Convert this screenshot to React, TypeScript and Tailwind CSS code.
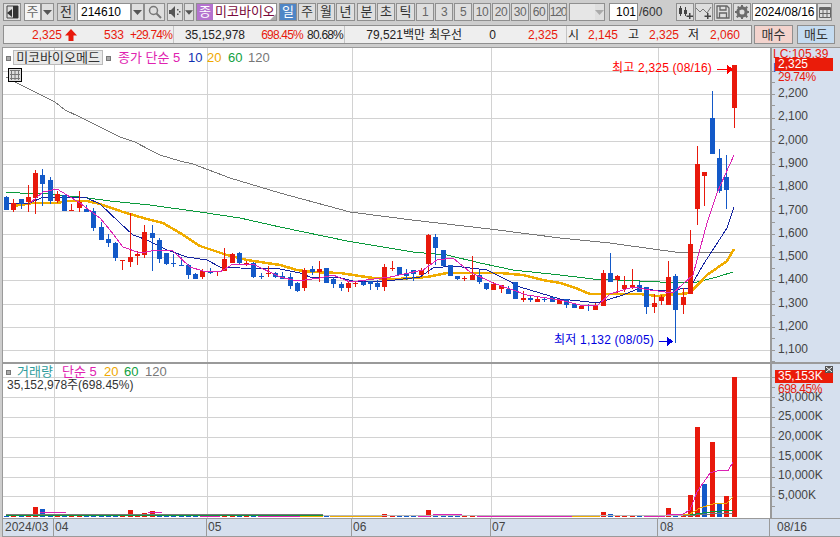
import type { ReactNode } from "react";

type Candle = [number, number, number, number, "r" | "b"];

// 일봉: 몸통 위, 몸통 아래, 꼬리 위, 꼬리 아래 (화면 y좌표)
const candles: Candle[] = [
  [197, 210, 196, 210, "b"], [203, 210, 199, 212, "r"], [199, 204, 199, 209, "b"], [197, 202, 185, 212, "r"],
  [173, 198, 170, 214, "r"], [175, 184, 169, 206, "b"], [180, 201, 177, 204, "b"], [194, 201, 191, 203, "r"],
  [195, 211, 195, 211, "b"], [210, 211, 204, 211, "r"], [202, 208, 191, 212, "r"], [209, 212, 205, 212, "b"],
  [211, 228, 208, 231, "b"], [227, 240, 222, 240, "b"], [239, 243, 234, 247, "b"], [243, 258, 242, 261, "b"],
  [260, 261, 260, 270, "r"], [257, 262, 213, 267, "r"], [254, 256, 251, 265, "r"], [232, 255, 225, 258, "r"],
  [233, 238, 225, 271, "b"], [240, 259, 238, 263, "b"], [253, 264, 253, 265, "b"], [263, 264, 254, 267, "b"],
  [265, 266, 257, 266, "b"], [265, 275, 264, 279, "b"], [274, 279, 273, 279, "b"], [271, 277, 269, 279, "r"],
  [272, 273, 268, 274, "b"], [271, 272, 271, 276, "r"], [259, 271, 248, 271, "r"], [254, 263, 253, 263, "r"],
  [253, 263, 252, 264, "b"], [263, 265, 261, 266, "r"], [263, 277, 262, 278, "b"], [276, 277, 273, 279, "b"],
  [273, 274, 266, 277, "r"], [273, 277, 272, 278, "b"], [276, 279, 272, 279, "b"], [277, 286, 273, 289, "b"],
  [283, 291, 282, 292, "b"], [270, 288, 268, 291, "r"], [269, 272, 266, 275, "b"], [269, 272, 261, 282, "r"],
  [268, 283, 268, 283, "b"], [279, 284, 277, 288, "b"], [284, 288, 282, 291, "b"], [283, 288, 281, 292, "r"],
  [283, 284, 282, 287, "r"], [282, 285, 280, 286, "b"], [281, 284, 281, 290, "b"], [283, 287, 280, 290, "b"],
  [267, 287, 264, 291, "r"], [268, 269, 261, 271, "r"], [267, 275, 267, 275, "b"], [274, 276, 269, 280, "b"],
  [270, 274, 270, 281, "b"], [270, 275, 268, 275, "r"], [235, 264, 234, 274, "r"], [237, 248, 234, 265, "b"],
  [250, 266, 250, 267, "b"], [265, 276, 265, 276, "b"], [276, 279, 276, 280, "b"], [278, 279, 276, 281, "r"],
  [275, 280, 256, 280, "r"], [275, 282, 270, 284, "b"], [283, 289, 283, 290, "b"], [284, 290, 282, 290, "r"],
  [285, 289, 285, 293, "r"], [289, 294, 286, 294, "b"], [282, 299, 282, 299, "b"], [298, 300, 291, 302, "r"],
  [298, 300, 296, 302, "b"], [299, 302, 297, 302, "r"], [299, 300, 297, 302, "b"], [297, 302, 297, 302, "b"],
  [300, 304, 299, 304, "r"], [299, 305, 299, 308, "b"], [304, 308, 304, 308, "b"], [306, 309, 306, 309, "r"],
  [305, 306, 304, 311, "b"], [305, 310, 303, 310, "r"], [273, 306, 270, 306, "r"], [273, 282, 253, 282, "b"],
  [276, 280, 275, 293, "r"], [285, 289, 276, 292, "r"], [285, 288, 269, 289, "r"], [285, 292, 281, 292, "b"],
  [287, 307, 287, 314, "b"], [303, 307, 294, 313, "r"], [297, 301, 295, 305, "r"], [277, 305, 261, 305, "r"],
  [276, 310, 274, 343, "b"], [297, 305, 288, 314, "r"], [244, 294, 230, 294, "r"], [164, 209, 146, 225, "r"],
  [172, 176, 172, 206, "r"], [118, 154, 91, 154, "b"], [158, 191, 149, 193, "b"], [177, 190, 155, 209, "b"],
  [65, 108, 65, 128, "r"],
];

const candleX = (i: number) => Math.floor(6.5 + 7.276 * i);

const ma120 = "6,77 15,82 33,91 55,102 65,110 80,117 100,127 120,137 135,142 150,150 160,155 180,161 193,164 230,178 280,193 350,212 412,220 490,229 560,238 610,243 660,250 683,253 733,252";
const ma60 = "6,192 20,193 50,194 88,198 110,201 150,205 200,212 240,218 280,227 347,241 413,252 447,255 480,263 513,270 560,275 593,279 640,281 660,282 693,283 717,277 733,272";
const ma20 = "13,206 33,203 57,203 67,201 87,201 100,204 123,212 147,219 163,223 180,233 200,246 227,255 247,260 280,265 297,270 313,272 340,273 373,278 397,279 427,277 447,273 500,273 523,275 543,280 560,283 573,287 590,294 640,294 657,296 690,293 707,275 727,261 734,249";
const ma10 = "7,203 30,203 43,197 57,197 87,198 100,204 120,223 133,235 147,240 167,250 187,257 207,260 220,267 240,268 280,269 300,273 310,277 337,277 353,281 387,281 420,277 433,268 453,266 487,270 507,280 520,287 560,299 580,301 597,303 623,295 640,288 660,291 690,288 703,265 727,228 734,207";
const ma5 = "30,203 43,192 57,189 67,195 80,203 100,218 110,230 123,247 140,253 157,250 173,251 190,267 203,271 220,272 233,264 253,264 280,277 297,281 320,278 333,275 350,282 390,277 423,270 437,260 453,258 470,272 493,283 527,295 560,300 580,305 598,305 610,294 633,287 650,290 673,293 693,275 707,223 717,193 734,155";

// 거래량 막대 (바닥에 붙은 것 외)
const volTop: Record<number, [number, "r" | "b"]> = {
  4: [507, "r"], 5: [509, "b"], 17: [510, "r"], 19: [513, "r"], 20: [511, "r"], 52: [514, "r"], 58: [510, "r"],
  82: [512, "r"], 83: [514, "b"], 91: [508, "r"], 94: [495, "r"], 95: [427, "r"], 96: [484, "b"], 97: [442, "r"],
  98: [503, "b"], 99: [496, "r"], 100: [377, "r"],
};

const priceGrid = [71, 94, 118, 141, 164, 187, 211, 234, 257, 280, 304, 327, 350];
const volGrid = [377, 397, 417, 437, 457, 477, 496];
const timeGrid = [54, 207, 352, 491, 658];

const priceLabels = [
  ["2,200", 93], ["2,100", 116], ["2,000", 140], ["1,900", 163], ["1,800", 186], ["1,700", 210],
  ["1,600", 233], ["1,500", 256], ["1,400", 279], ["1,300", 303], ["1,200", 326], ["1,100", 349],
] as const;
const volLabels = [
  ["30,000K", 397], ["25,000K", 416], ["20,000K", 436], ["15,000K", 456], ["10,000K", 475], ["5,000K", 495],
] as const;

const font = { fontFamily: '"Liberation Sans", "Noto Sans CJK KR", sans-serif' };

function Btn({
  className = "",
  bg = "bg-[#dedede]",
  text = "text-[13px] text-[#333]",
  children,
}: {
  className?: string;
  bg?: string;
  text?: string;
  children?: ReactNode;
}) {
  return (
    <div className={`flex h-full items-center justify-center overflow-hidden border border-[#8f8f8f] ${bg} ${text} ${className}`}>
      {children}
    </div>
  );
}

function Caret({ color = "#555" }: { color?: string }) {
  return (
    <svg width="9" height="5" viewBox="0 0 9 5">
      <path d="M0 0h9L4.5 5z" fill={color} />
    </svg>
  );
}

function Toolbar() {
  return (
    <div className="flex h-[18px] pl-[3px]">
      <Btn className="w-[18px]">
        <svg width="13" height="14" viewBox="0 0 13 14">
          <path d="M1 1h11v12H1z" fill="none" stroke="#444" />
          <path d="M7 1h5v12H7zM1 8l5-4v8z" fill="#333" />
        </svg>
      </Btn>
      <Btn className="ml-[3px] w-[17px]" bg="bg-[#f4f4f4]" text="text-[13px] text-[#666]">주</Btn>
      <Btn className="w-[13px]"><Caret /></Btn>
      <Btn className="ml-[3px] w-[18px]" bg="bg-[#d4d4d4]">전</Btn>
      <Btn className="ml-[2px] w-[54px] justify-start pl-[3px]" bg="bg-white" text="text-[12px] text-black">214610</Btn>
      <Btn className="w-[13px]"><Caret /></Btn>
      <Btn className="w-[21px]">
        <svg width="14" height="14" viewBox="0 0 14 14" fill="none" stroke="#777">
          <circle cx="5.5" cy="5.5" r="4" strokeWidth="1.5" />
          <path d="M8.5 8.5L13 13" strokeWidth="2" />
        </svg>
      </Btn>
      <Btn className="ml-[2px] w-[16px]">
        <svg width="12" height="12" viewBox="0 0 12 12" fill="#555">
          <path d="M0 4h2l4-4v12L2 8H0z" />
          <path d="M8 3h1.500v1.500H8zM10 5h1.500v1.500H10zM8 7.500h1.500V9H8z" />
        </svg>
      </Btn>
      <Btn className="ml-px w-[10px]"><Caret /></Btn>
      <div className="relative ml-[2px] flex w-[81px] overflow-hidden border border-[#8f8f8f] bg-white">
        <div className="flex w-[16px] items-center justify-center bg-[#b573cf] text-[13px] text-white">종</div>
        <div className="flex items-center whitespace-nowrap pl-[2px] text-[13px] text-[#7a0a3c]">미코바이오</div>
        <div className="absolute bottom-0 right-0 h-0 w-0 border-b-[6px] border-l-[6px] border-b-[#aaa] border-l-transparent" />
      </div>
      <Btn className="ml-[2px] w-[18px]" bg="bg-[#4f86c6]" text="text-[13px] text-white">일</Btn>
      <Btn className="ml-px w-[18px]">주</Btn>
      <Btn className="ml-px w-[18px]">월</Btn>
      <Btn className="ml-px w-[19px]">년</Btn>
      <Btn className="ml-[2px] w-[19px]">분</Btn>
      <Btn className="ml-px w-[18px]">초</Btn>
      <Btn className="ml-px w-[19px]">틱</Btn>
      <div className="ml-px flex gap-px">
        {["1", "3", "5", "10", "20", "30", "60"].map((n) => (
          <Btn key={n} className="w-[18px] tracking-[-0.5px]" text="text-[12px] text-[#666]">{n}</Btn>
        ))}
        <Btn className="w-[18px] tracking-[-1.2px]" text="text-[12px] text-[#666]">120</Btn>
      </div>
      <div className="ml-[2px] flex w-[36px] border border-[#8f8f8f] bg-[#dedede]">
        <div className="w-[25px] bg-[#e6e6e6]" />
        <div className="flex flex-1 items-center justify-center"><Caret color="#aaa" /></div>
      </div>
      <Btn className="ml-[4px] w-[29px] justify-end pr-[1px]" bg="bg-white" text="text-[12px] text-black">101</Btn>
      <div className="ml-[1px] flex w-[37px] items-center text-[12px] text-[#333]">/600</div>
      <Btn className="w-[18px]">
        <svg width="15" height="14" viewBox="0 0 15 14" fill="#444">
          <path d="M1 3h3v6H1zM2 1h1v10H2zM6 5h3v4H6zM7 2h1v9H7z" />
          <path d="M11 8h1.500v2.500H15V12h-2.500v2H11v-2H8.500v-1.500H11z" />
        </svg>
      </Btn>
      <Btn className="ml-px w-[18px]">
        <svg width="16" height="14" viewBox="0 0 16 14">
          <path d="M0 3l4 4 3-3 4 4 4-6" fill="none" stroke="#777" />
          <path d="M11 8h1.500v2.500H15V12h-2.500v2H11v-2H8.500v-1.500H11z" fill="#444" />
        </svg>
      </Btn>
      <Btn className="ml-px w-[18px]">
        <svg width="14" height="14" viewBox="0 0 14 14" fill="none" stroke="#666" strokeWidth="1.300">
          <path d="M1 1h10l2 2v10H1z" />
          <path d="M4 1v4h6V1M3.500 13V8h7v5" />
        </svg>
      </Btn>
      <Btn className="ml-px w-[18px]">
        <svg width="14" height="14" viewBox="0 0 14 14">
          <circle cx="7" cy="7" r="4.200" fill="none" stroke="#6b6b6b" strokeWidth="3" />
          <path d="M6 0h2v14H6zM0 6h14v2H0zM2 2l1.500-1 9.500 10.500-1.500 1.500zM11.500 1L13 2.500 2.500 13 1 11.500z" fill="#6b6b6b" />
          <circle cx="7" cy="7" r="2.500" fill="#dedede" />
        </svg>
      </Btn>
      <Btn className="ml-px w-[65px]" bg="bg-white" text="text-[12px] text-black">2024/08/16</Btn>
      <Btn className="w-[15px]">
        <svg width="12" height="11" viewBox="0 0 12 11" fill="none" stroke="#666">
          <path d="M.5 .5h11v10H.5z" />
          <path d="M0 1.500h12M0 2.500h12" />
          <path d="M4 3v7M8 3v7M1 6.500h10" />
        </svg>
      </Btn>
    </div>
  );
}

function Cell({ w, right = true, red = false, ml = "", children }: { w: string; right?: boolean; red?: boolean; ml?: string; children: ReactNode }) {
  return (
    <div className={`whitespace-nowrap ${w} ${ml} ${right ? "text-right" : ""} ${red ? "text-[#e8190c]" : "text-[#222]"}`}>
      {children}
    </div>
  );
}

function QuoteRow() {
  return (
    <div className="mt-[4px] flex h-[19px] pl-[3px]">
      <div className="flex w-[749px] items-center border border-[#8f8f8f] bg-[#eeeeee] text-[12px]">
        <div className="flex h-full w-[170px] items-center border-r border-[#c4c4c4]">
          <Cell w="w-[58px]" red>2,325</Cell>
          <svg className="ml-[3px]" width="12" height="12" viewBox="0 0 12 12">
            <path d="M6 0l6 6.500H8.500V12h-5V6.500H0z" fill="#e8190c" />
          </svg>
          <Cell w="w-[47px]" red>533</Cell>
          <Cell w="w-[48px] tracking-[-0.8px]" red>+29.74%</Cell>
        </div>
        <div className="flex h-full w-[171px] items-center border-r border-[#c4c4c4]">
          <Cell w="w-[71px]">35,152,978</Cell>
          <Cell w="w-[58px] tracking-[-0.8px]" red>698.45%</Cell>
          <Cell w="w-[40px] tracking-[-0.8px]">80.68%</Cell>
        </div>
        <div className="flex h-full w-[222px] items-center border-r border-[#c4c4c4]">
          <Cell w="w-[80px]">79,521백만</Cell>
          <Cell w="w-[36px]" right={false} ml="ml-[4px]">최우선</Cell>
          <Cell w="w-[31px]">0</Cell>
          <Cell w="w-[62px]" red>2,325</Cell>
        </div>
        <div className="flex h-full flex-1 items-center">
          <Cell w="w-[14px]" right={false} ml="ml-px">시</Cell>
          <Cell w="w-[36px]" red>2,145</Cell>
          <Cell w="w-[12px]" right={false} ml="ml-[10px]">고</Cell>
          <Cell w="w-[39px]" red>2,325</Cell>
          <Cell w="w-[13px]" right={false} ml="ml-[9px]">저</Cell>
          <Cell w="w-[39px]" red>2,060</Cell>
        </div>
      </div>
      <div className="ml-[2px] flex w-[39px] items-center justify-center border border-[#8f8f8f] bg-[#f3d3cd] text-[13px] text-[#333]">매수</div>
      <div className="ml-[4px] flex w-[38px] items-center justify-center border border-[#8f8f8f] bg-[#c5dcf1] text-[13px] text-[#333]">매도</div>
    </div>
  );
}

function PricePlot() {
  return (
    <svg className="absolute inset-0" width="767" height="314" viewBox="3 48 767 314" shapeRendering="crispEdges">
      <g fill="#d2d2d2">
        {priceGrid.map((y) => <rect key={y} x="3" y={y} width="767" height="1" />)}
        {timeGrid.map((x) => <rect key={x} x={x} y="48" width="1" height="314" />)}
      </g>
      <polyline points={ma120} fill="none" stroke="#777" strokeWidth="1" />
      <polyline points={ma60} fill="none" stroke="#0b9a3c" strokeWidth="1" />
      <polyline points={ma20} fill="none" stroke="#f0ac00" strokeWidth="2.500" />
      <polyline points={ma10} fill="none" stroke="#1424a0" strokeWidth="1" />
      {candles.map(([t, b, wt, wb, c], i) => {
        const x = candleX(i);
        const col = c === "r" ? "#e8190c" : "#1359c8";
        return (
          <g key={i} fill={col}>
            <rect x={x} y={wt} width="1" height={wb - wt} />
            <rect x={x - 2} y={t} width="5" height={b - t} />
          </g>
        );
      })}
      <polyline points={ma5} fill="none" stroke="#dc22b4" strokeWidth="1" />
      <path d="M717 69.500h10M727 65l5 4.500-5 4.500z" fill="#f00" stroke="#f00" />
      <path d="M659 341.500h8M667 337l5 4.500-5 4.500z" fill="#0000e0" stroke="#0000e0" />
    </svg>
  );
}

function VolumePlot() {
  return (
    <svg className="absolute inset-0" width="767" height="154" viewBox="3 364 767 154" shapeRendering="crispEdges">
      <g fill="#d2d2d2">
        {volGrid.map((y) => <rect key={y} x="3" y={y} width="767" height="1" />)}
        {timeGrid.map((x) => <rect key={x} x={x} y="364" width="1" height="154" />)}
      </g>
      {candles.map((cd, i) => {
        const v = volTop[i];
        const top = v ? v[0] : 515.5;
        const c = v ? v[1] : cd[4];
        return <rect key={i} x={candleX(i) - 2} y={top} width="5" height={517 - top} fill={c === "r" ? "#e8190c" : "#1359c8"} />;
      })}
      <rect x="6" y="514" width="317" height="1" fill="#777" />
      <rect x="6" y="515" width="317" height="1" fill="#0b9a3c" />
      <rect x="323" y="515" width="360" height="1" fill="#b9b9b9" />
      <rect x="40" y="512" width="26" height="1" fill="#dc22b4" />
      <rect x="200" y="516" width="20" height="1" fill="#dc22b4" />
      <rect x="148" y="512" width="14" height="1" fill="#dc22b4" />
      <rect x="258" y="516" width="42" height="1" fill="#dc22b4" />
      <rect x="300" y="516" width="23" height="1" fill="#f0ac00" />
      <rect x="330" y="516" width="52" height="1" fill="#f0ac00" />
      <rect x="418" y="516" width="12" height="1" fill="#dc22b4" />
      <rect x="433" y="514" width="29" height="1" fill="#dc22b4" />
      <rect x="477" y="516" width="95" height="1" fill="#dc22b4" />
      <rect x="572" y="516" width="28" height="1" fill="#f0ac00" />
      <rect x="644" y="516" width="21" height="1" fill="#dc22b4" />
      <polyline points="667,514 683,514 690,510 697,492 710,473 720,470 728,471 733,462" fill="none" stroke="#dc22b4" strokeWidth="1" />
      <polyline points="683,515 690,514 700,508 713,504 727,503 733,497" fill="none" stroke="#f0ac00" strokeWidth="1" />
      <polyline points="683,516 710,512 733,510" fill="none" stroke="#0b9a3c" strokeWidth="1" />
      <polyline points="683,516 710,514 733,513" fill="none" stroke="#777" strokeWidth="1" />
    </svg>
  );
}

function Legend({ className = "", children }: { className?: string; children: ReactNode }) {
  return <span className={`text-[13px] leading-none ${className}`}>{children}</span>;
}

function AxisTicks({ ys }: { ys: number[] }) {
  return (
    <>
      {ys.map((y) => (
        <div key={y} className="absolute left-0 h-px w-[3px] bg-[#999]" style={{ top: y }} />
      ))}
    </>
  );
}

function AxisLabel({ top, children }: { top: number; children: ReactNode }) {
  return (
    <div className="absolute left-[6px] text-[12px] leading-[14px] text-[#444]" style={{ top: top - 7 }}>
      {children}
    </div>
  );
}

function Marker() {
  return <span className="mt-[1px] block h-[5px] w-[5px] border border-[#777] bg-[#aaa]" />;
}

export default function App() {
  const paneTop = 48;
  const volTopY = 364;
  const priceTicks = priceGrid.flatMap((y) => [y - paneTop, y - paneTop + 11]);
  const volTicks = volGrid.flatMap((y) => [y - volTopY, y - volTopY + 10]);

  return (
    <div className="flex h-[537px] w-[840px] flex-col overflow-hidden bg-[#cdcdcd] pt-[3px]" style={font}>
      <Toolbar />
      <QuoteRow />

      <div className="mt-[3px] flex flex-1 flex-col pl-[2px]">
        <div className="flex flex-1 flex-col border-l border-t border-[#9a9a9a]">
          {/* 가격 차트 */}
          <div className="flex h-[314px]">
            <div className="relative w-[767px] overflow-hidden bg-white">
              <PricePlot />
              <div className="absolute left-[3px] top-[2px] flex h-[15px] items-center whitespace-nowrap">
                <Marker />
                <div className="ml-[2px] flex h-[15px] w-[90px] items-center justify-center border border-[#bbb] bg-[#e9e9e9] text-[13px] text-[#333]">미코바이오메드</div>
                <span className="ml-[3px]"><Marker /></span>
                <Legend className="ml-[7px] w-[70px] text-[#e022b0]">종가 단순 5</Legend>
                <Legend className="w-[19px] text-[#1030b0]">10</Legend>
                <Legend className="w-[21px] text-[#f0a800]">20</Legend>
                <Legend className="w-[20px] text-[#10a040]">60</Legend>
                <Legend className="text-[#777]">120</Legend>
              </div>
              <div className="absolute left-[5px] top-[20px] flex h-[14px] w-[14px] items-center justify-center border border-black bg-[#ddd]">
                <svg width="10" height="10" viewBox="0 0 10 10" fill="none" stroke="#777">
                  <path d="M0 .500h10M0 4.500h10M0 8.500h10M1.500 0v10M5 0v10M8.500 0v10" />
                </svg>
              </div>
              <div className="absolute left-[609px] top-[13px] whitespace-nowrap text-[12px] leading-[14px] tracking-[0.2px] text-[#f00]">최고 2,325 (08/16)</div>
              <div className="absolute left-[551px] top-[285px] whitespace-nowrap text-[12px] leading-[14px] tracking-[0.2px] text-[#0000e0]">최저 1,132 (08/05)</div>
            </div>
            <div className="relative flex-1 overflow-hidden border-l-2 border-[#9a9a9a] bg-[#d6e0ee]">
              <AxisTicks ys={priceTicks} />
              <div className="absolute left-[1px] top-0 whitespace-nowrap text-[12px] leading-[12px] text-[#e8190c]">LC:105.39</div>
              <div className="absolute left-[1px] top-[14px] text-[12px] leading-[12px] text-[#1359c8]">H</div>
              <div className="absolute left-[3px] top-[10px] h-[13px] w-[58px] bg-[#ea1c0a] pl-[3px] text-[12px] leading-[13px] text-white">2,325</div>
              <div className="absolute left-[6px] top-[22px] text-[12px] leading-[14px] tracking-[-0.5px] text-[#e8190c]">29.74%</div>
              {priceLabels.map(([t, y]) => (
                <AxisLabel key={t} top={y - paneTop}>{t}</AxisLabel>
              ))}
            </div>
          </div>

          <div className="h-[2px] bg-[#9a9a9a]" />

          {/* 거래량 */}
          <div className="flex h-[154px]">
            <div className="relative w-[767px] overflow-hidden bg-white">
              <VolumePlot />
              <div className="absolute left-[3px] top-[1px] flex items-center whitespace-nowrap">
                <Marker />
                <Legend className="ml-[6px] w-[45px] text-[#2f9c9c]">거래량</Legend>
                <Legend className="w-[42px] text-[#e022b0]">단순 5</Legend>
                <Legend className="w-[20px] text-[#f0a800]">20</Legend>
                <Legend className="w-[21px] text-[#10a040]">60</Legend>
                <Legend className="text-[#777]">120</Legend>
              </div>
              <div className="absolute left-[4px] top-[14px] whitespace-nowrap text-[12px] leading-[14px] text-[#333]">35,152,978주(698.45%)</div>
            </div>
            <div className="relative flex-1 overflow-hidden border-l-2 border-[#9a9a9a] bg-[#d6e0ee]">
              <AxisTicks ys={volTicks} />
              {volLabels.map(([t, y]) => (
                <AxisLabel key={t} top={y - volTopY}>{t}</AxisLabel>
              ))}
              <div className="absolute left-[3px] top-[6px] h-[13px] w-[58px] bg-[#ea1c0a] pl-[3px] text-[12px] leading-[13px] text-white">35,153K</div>
              <div className="absolute left-[6px] top-[18px] text-[12px] leading-[14px] tracking-[-0.5px] text-[#e8190c]">698.45%</div>
              <div className="absolute left-[53px] top-[2px] flex h-[7px] w-[8px] items-center justify-center bg-[#555]">
                <svg width="6" height="5" viewBox="0 0 6 5" stroke="#fff" fill="none">
                  <path d="M0 0l6 5M6 0L0 5" />
                </svg>
              </div>
            </div>
          </div>

          {/* 날짜 축 */}
          <div className="flex h-[19px] border-y border-[#9a9a9a] bg-[#d6e0ee] text-[12px] leading-[17px] text-[#444]">
            <div className="w-[51px] border-r border-[#9a9a9a] pl-[2px]">2024/03</div>
            <div className="w-[153px] border-r border-[#9a9a9a] pl-px">04</div>
            <div className="w-[145px] border-r border-[#9a9a9a] pl-px">05</div>
            <div className="w-[139px] border-r border-[#9a9a9a] pl-px">06</div>
            <div className="w-[167px] border-r border-[#9a9a9a] pl-px">07</div>
            <div className="w-[112px] border-r border-[#9a9a9a] pl-[2px]">08</div>
            <div className="pl-[7px]">08/16</div>
          </div>
        </div>
      </div>
    </div>
  );
}
